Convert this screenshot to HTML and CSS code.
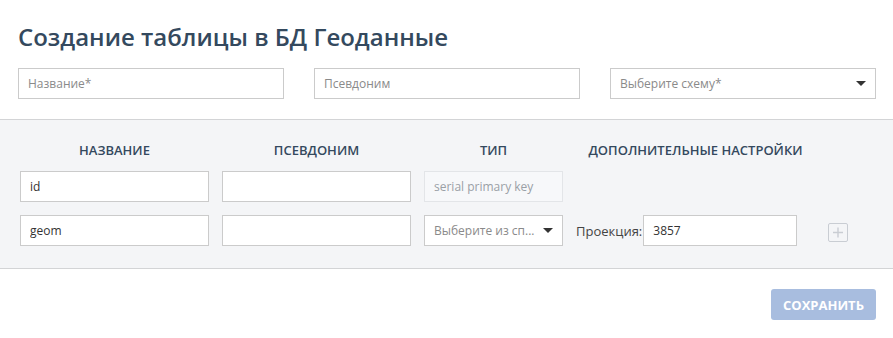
FILE: index.html
```html
<!DOCTYPE html>
<html lang="ru">
  <head>
    <meta charset="utf-8" />
    <title>Создание таблицы в БД Геоданные</title>
    <link rel="stylesheet" href="styles.css">
  </head>
  <body>
    <div class="page">
      <h1 class="page-title">Создание таблицы в БД Геоданные</h1>

      <!-- Table properties -->
      <div class="table-props">
        <input class="field" type="text" placeholder="Название*" />
        <input class="field" type="text" placeholder="Псевдоним" />
        <div class="select">
          <span class="select-placeholder">Выберите схему*</span>
          <span class="select-arrow"></span>
        </div>
      </div>

      <!-- Columns editor -->
      <div class="columns">
        <div class="columns-grid">
          <div class="col-head">Название</div>
          <div class="col-head">Псевдоним</div>
          <div class="col-head">Тип</div>
          <div class="col-head">Дополнительные настройки</div>
          <div></div>

          <input class="field" type="text" value="id" />
          <input class="field" type="text" />
          <input class="field field-readonly" type="text" value="serial primary key" readonly />
          <div></div>
          <div></div>

          <input class="field" type="text" value="geom" />
          <input class="field" type="text" />
          <div class="select">
            <span class="select-placeholder">Выберите из сп...</span>
            <span class="select-arrow"></span>
          </div>
          <div class="extra">
            <span class="extra-label">Проекция:</span>
            <input class="field extra-input" type="text" value="3857" />
          </div>
          <div class="add-cell">
            <svg class="add-btn" width="20" height="19" viewBox="0 0 20 19" fill="none" xmlns="http://www.w3.org/2000/svg">
              <rect x="0.5" y="0.5" width="19" height="18" rx="1.5" stroke="#c9cdd3"/>
              <path d="M10 4.5V14.5M5 9.5H15" stroke="#c9cdd3" stroke-width="1.4"/>
            </svg>
          </div>
        </div>
      </div>

      <div class="footer">
        <button class="btn-save" type="button" disabled>Сохранить</button>
      </div>
    </div>
  </body>
</html>
```

FILE: styles.css
```css
/* Base */
body {
  margin: 0;
  background: #fff;
  font-family: "Open Sans", "Noto Sans", sans-serif;
  color: #333;
}

.page-title {
  margin: 0;
  padding: 20px 18px 0;
  font-size: 24px;
  line-height: 33px;
  font-weight: 600;
  color: #34495e;
}

/* Inputs */
.field {
  box-sizing: border-box;
  width: 100%;
  height: 31px;
  margin: 0;
  padding: 0 9px;
  border: 1px solid #cbcbcb;
  border-radius: 0;
  background: #fff;
  font-family: inherit;
  font-size: 12px;
  color: #333;
  outline: none;
}

.field::placeholder {
  color: #8a8a8a;
}

.field-readonly {
  background: #f7f8fa;
  border-color: #e3e5e8;
  color: #9aa0a6;
}

.select {
  box-sizing: border-box;
  height: 31px;
  padding: 0 9px;
  border: 1px solid #cbcbcb;
  background: #fff;
  display: flex;
  align-items: center;
  justify-content: space-between;
  font-size: 12px;
}

.select-placeholder {
  color: #8a8a8a;
  white-space: nowrap;
}

.select-arrow {
  width: 0;
  height: 0;
  border-left: 5px solid transparent;
  border-right: 5px solid transparent;
  border-top: 5px solid #333;
}

/* Top row */
.table-props {
  display: grid;
  grid-template-columns: repeat(3, 1fr);
  gap: 30px;
  padding: 15px 17px 0 18px;
}

/* Columns editor */
.columns {
  margin-top: 20px;
  background: #f4f5f7;
  border-top: 1px solid #d3d4d6;
  border-bottom: 1px solid #d3d4d6;
  padding: 21px 0 22px 20px;
}

.columns-grid {
  display: grid;
  grid-template-columns: 189px 189px 139px 239px 20px;
  column-gap: 13px;
  row-gap: 13px;
  align-items: center;
}

.col-head {
  text-align: center;
  text-transform: uppercase;
  font-size: 13px;
  font-weight: 600;
  color: #34495e;
  line-height: 18px;
  margin-bottom: -1px;
  white-space: nowrap;
}

.extra {
  display: flex;
  align-items: center;
  gap: 1px;
}

.extra-label {
  font-size: 13px;
  color: #444;
  white-space: nowrap;
}

.extra-input {
  width: 154px;
}

.add-cell {
  display: flex;
  align-items: center;
  padding-top: 3px;
}

.add-btn {
  display: block;
}

/* Footer */
.footer {
  display: flex;
  justify-content: flex-end;
  padding: 20px 17px 0;
}

.btn-save {
  width: 105px;
  height: 31px;
  border: none;
  border-radius: 3px;
  background: #a8bddf;
  color: #fff;
  font-family: inherit;
  font-size: 13px;
  font-weight: 700;
  text-transform: uppercase;
}
```
